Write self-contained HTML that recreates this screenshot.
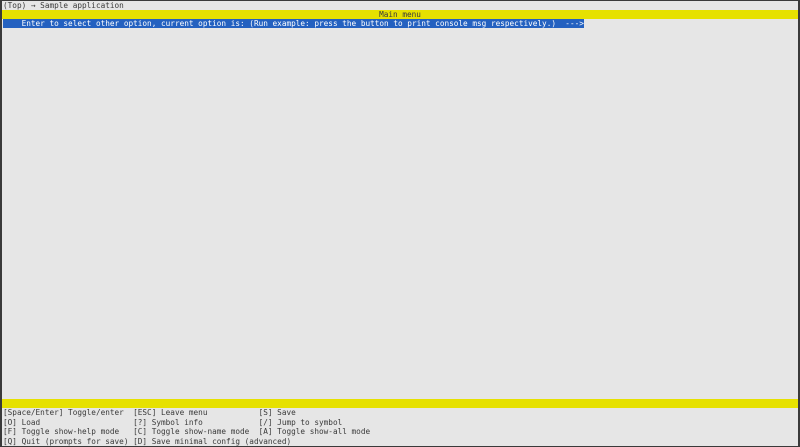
<!DOCTYPE html>
<html><head><style>
html,body{margin:0;padding:0;}
body{width:800px;height:447px;background:#3a3a3a;position:relative;overflow:hidden;}
#t{position:absolute;left:2px;top:1px;width:796px;height:445px;background:#e6e6e6;}
.l{position:absolute;left:1px;white-space:pre;font-family:"DejaVu Sans Mono","Liberation Mono",monospace;font-size:7.72px;line-height:9.6px;height:9.6px;color:#3a3a3a;}
.y{position:absolute;left:0;width:796px;background:#e6e100;}
</style></head><body>
<div id="t">
<div class="l" style="top:0">(Top) → Sample application</div>
<div class="y" style="top:9px;height:9px"></div>
<div class="l" style="top:8.5px;left:0;width:796px;text-align:center">Main menu</div>
<div style="position:absolute;left:1px;top:18px;width:581px;height:9px;background:#2461c0"></div>
<div class="l" style="top:17.5px;color:#fff">    Enter to select other option, current option is: (Run example: press the button to print console msg respectively.)  ---></div>
<div class="y" style="top:398px;height:9px"></div>
<div class="l" style="top:407px">[Space/Enter] Toggle/enter  [ESC] Leave menu           [S] Save</div>
<div class="l" style="top:416.6px">[O] Load                    [?] Symbol info            [/] Jump to symbol</div>
<div class="l" style="top:426.2px">[F] Toggle show-help mode   [C] Toggle show-name mode  [A] Toggle show-all mode</div>
<div class="l" style="top:435.8px">[Q] Quit (prompts for save) [D] Save minimal config (advanced)</div>
</div>
</body></html>
